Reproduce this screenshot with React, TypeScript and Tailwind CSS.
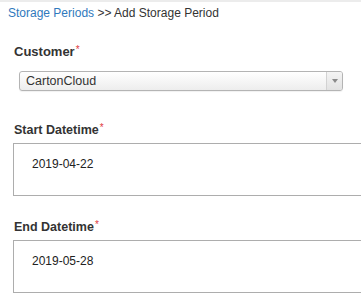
import { useState } from 'react';

interface DateFieldProps {
  label: string;
  value: string;
  className?: string;
}

const Required = () => (
  <span className="relative -top-[3px] ml-[1px] text-[10px] font-normal text-[#e0393e]">*</span>
);

const DateField: React.FC<DateFieldProps> = ({ label, value, className = '' }) => (
  <div className={className}>
    <label className="block pl-[14px] text-[12.5px] font-bold leading-[15px] text-[#333]">
      {label}
      <Required />
    </label>
    <div className="ml-[13px] mt-[5px] h-[53px] w-[360px] border border-[#adadad] pl-[18px] pt-[13px]">
      <span className="block text-[12px] leading-[14px] text-[#222]">{value}</span>
    </div>
  </div>
);

export default function App() {
  const [customer] = useState('CartonCloud');

  return (
    <div className="h-[305px] w-[361px] overflow-hidden bg-white font-['Liberation_Sans',Arial,sans-serif]">
      {/* 상단 라인 */}
      <div className="h-[2px] bg-[#ececec]" />

      {/* 브레드크럼 */}
      <div className="pl-[8px] pt-[4px] text-[12px] leading-[14px] text-[#333]">
        <a className="text-[#2f79bd]">Storage Periods</a> &gt;&gt; Add Storage Period
      </div>

      {/* 고객 선택 */}
      <label className="mt-[24px] block pl-[14px] text-[13px] font-bold leading-[15px] text-[#333]">
        Customer
        <Required />
      </label>
      <div className="ml-[19px] mt-[11px] flex h-[20px] w-[324px] overflow-hidden rounded-[3px] border border-[#b4b4b4] bg-gradient-to-b from-white to-[#ededed] shadow-[0_1px_1px_rgba(0,0,0,0.06)]">
        <span className="flex-1 pl-[6px] text-[12.5px] leading-[18px] text-[#333]">{customer}</span>
        <span className="flex w-[16px] items-center justify-center border-l border-[#d2d2d2] bg-gradient-to-b from-[#f4f4f4] to-[#e2e2e2]">
          <svg width="6" height="4" viewBox="0 0 6 4">
            <path d="M0 0h6L3 4z" fill="#8a8a8a" />
          </svg>
        </span>
      </div>

      <DateField label="Start Datetime" value="2019-04-22" className="mt-[32px]" />
      <DateField label="End Datetime" value="2019-05-28" className="mt-[24px]" />
    </div>
  );
}
